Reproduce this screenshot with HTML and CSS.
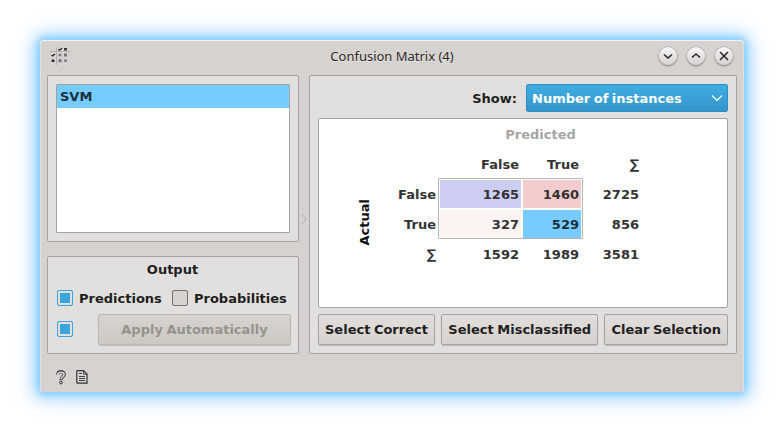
FILE: index.html
```html
<!DOCTYPE html>
<html lang="en">
<head>
<meta charset="utf-8">
<title>Confusion Matrix (4)</title>
<link rel="stylesheet" href="styles.css">
</head>
<body>
<main class="window">
  <header class="titlebar">
    <svg class="app-icon" width="20" height="18" viewBox="0 0 20 18">
      <path d="M0 4.500H20M6.500 0V18" stroke="#b3b0ae" fill="none"/>
      <path d="M8.500 2.200l1 1L12 1.200M1.500 7.900l1 1L5 6.900" stroke="#222" stroke-width="1.300" fill="none"/>
      <path d="M14.200 1h2.600v2.600h-2.600zM1.700 12.400h2.600v2.600H1.700z" fill="#222"/>
      <path d="M8.700 6.700h2.600v2.600H8.700zM14 6.500h3v3h-3zM8.500 12.200h3v3h-3zM14.200 12.400h2.600v2.600h-2.600z" fill="#777"/>
    </svg>
    <h1 class="title">Confusion Matrix (4)</h1>
    <div class="controls">
      <span class="control"><svg width="18" height="18" viewBox="0 0 18 18"><path d="M5 7.500l4 3.500 4-3.500"/></svg></span>
      <span class="control"><svg width="18" height="18" viewBox="0 0 18 18"><path d="M5 10.500l4-3.500 4 3.500"/></svg></span>
      <span class="control"><svg width="18" height="18" viewBox="0 0 18 18"><path d="M5 5l8 8M13 5l-8 8"/></svg></span>
    </div>
  </header>
  <div class="content">
    <aside class="sidebar">
      <section class="panel learners">
        <div class="list"><div class="list-item">SVM</div></div>
      </section>
      <section class="panel output">
        <h2 class="panel-title">Output</h2>
        <div class="checks">
          <span class="checkbox checked"></span><span class="check-label first">Predictions</span>
          <span class="checkbox"></span><span class="check-label">Probabilities</span>
        </div>
        <div class="apply">
          <span class="checkbox checked"></span>
          <button class="button disabled">Apply Automatically</button>
        </div>
      </section>
    </aside>
    <div class="splitter"><svg width="6" height="12" viewBox="0 0 6 12"><path d="M.5 1l5 5-5 5" fill="none" stroke="#aaa8a6"/></svg></div>
    <section class="panel results">
      <div class="show">
        <span class="show-label">Show:</span>
        <div class="combo"><span>Number of instances</span><svg width="12" height="8" viewBox="0 0 12 8"><path d="M1 1.500l5 5 5-5" fill="none" stroke="#fff" stroke-width="1.100"/></svg></div>
      </div>
      <div class="view">
        <div class="matrix">
          <div class="predicted">Predicted</div>
          <div class="actual"><span>Actual</span></div>
          <div class="cell head c1">False</div><div class="cell head">True</div><div class="cell head">∑</div>
          <div class="cell rowhead">False</div>
          <div class="frame">
            <div class="value correct">1265</div><div class="value wrong">1460</div>
            <div class="value faint">327</div><div class="value selected">529</div>
          </div>
          <div class="cell">2725</div>
          <div class="cell rowhead">True</div><div class="cell">856</div>
          <div class="cell rowhead">∑</div><div class="cell">1592</div><div class="cell">1989</div><div class="cell">3581</div>
        </div>
      </div>
      <div class="actions">
        <button class="button">Select Correct</button>
        <button class="button">Select Misclassified</button>
        <button class="button">Clear Selection</button>
      </div>
    </section>
  </div>
  <footer class="status">
    <svg width="10" height="15" viewBox="0 0 10 15"><path d="M1.800 4.500C1.800 .8 8.200 .8 8.200 4.300 8.200 6.600 5 6.700 5 10" fill="none" stroke="#444" stroke-width="3.400"/><path d="M1 4.500H1.900C2 1.500 8.100 1.500 8.100 4.300 8.100 6.600 5 6.700 5 9.200" fill="none" stroke="#d6d2cf" stroke-width="1.600"/><circle cx="5" cy="12.500" r="1.400" fill="#d6d2cf" stroke="#333"/></svg>
    <svg width="12" height="14" viewBox="0 0 12 14"><path d="M1.500.6h6l3.500 3.500v9H1.500q-.7 0-.7-.7V1.300q0-.7.700-.7z" fill="none" stroke="#333" stroke-width="1.200"/><path d="M7.500.8v3.400H11M3 3.500h3M3 6.500h6M3 8.500h6M3 10.500h6" fill="none" stroke="#444"/></svg>
  </footer>
</main>
</body>
</html>
```
FILE: styles.css
```css
* { box-sizing: border-box; }
body {
  margin: 0;
  padding: 40px;
  height: 432px;
  background: #fff;
  color: #221f1e;
  font: bold 13px/16px "DejaVu Sans", sans-serif;
  word-spacing: -1px;
  overflow: hidden;
}
.window {
  width: 704px;
  height: 352px;
  padding: 0 6px 0 7px;
  background: #d6d2cf;
  border-radius: 4px 4px 2px 2px;
  box-shadow: inset 0 1px #f3f2f1, inset 1px 0 #e2dfdd, inset -1px 0 #e2dfdd, 0 0 6px 1px #7dd2fb, 0 0 14px 4px #96d0fd, 0 1px 26px 7px #d5e8ff;
}
.titlebar {
  display: flex;
  height: 35px;
  justify-content: space-between;
  padding: 7px 5px 0 3px;
}
.app-icon { display: block; }
.title {
  margin: 0 0 0 55px;
  font: 13px/18px "Noto Sans", sans-serif;
  letter-spacing: -.01px;
  word-spacing: 0;
  color: #2b2827;
  text-shadow: 0 1px #eceae8;
}
.controls { display: flex; gap: 10px; }
.control {
  width: 18px;
  height: 18px;
  border-radius: 50%;
  background: linear-gradient(#f7f6f5, #d5d2cf);
  box-shadow: 0 0 0 .5px #aaa6a3, 0 1px 2px #6d6966;
}
.control svg { display: block; fill: none; stroke: #292625; stroke-width: 1.6; }
.content { display: flex; height: 279px; }
.sidebar { width: 252px; display: flex; flex-direction: column; gap: 14px; }
.panel {
  background: #e1e0de;
  border: 1px solid #a5a2a0;
  border-radius: 2px;
  padding: 8px;
}
.learners { height: 167px; }
.list { height: 149px; border: 1px solid #a5a2a0; border-radius: 1px; background: #fff; }
.list-item { height: 23px; padding-left: 3px; line-height: 23px; background: #78cbff; color: #18313f; }
.output { height: 98px; padding: 5px 7px 7px 9px; }
.panel-title { margin: 0; padding-right: 3px; font-size: 13px; line-height: 16px; text-align: center; }
.checks { display: flex; align-items: center; height: 16px; margin-top: 12px; }
.checkbox { width: 16px; height: 16px; flex: none; border: 1px solid #77716e; border-radius: 2px; background: #d6d2cf; }
.checked { border-color: #3aa5dc; background: #3aa5dc; box-shadow: inset 0 0 0 2px #e1e0de; }
.check-label { margin-left: 6px; padding-top: 2px; }
.check-label.first { width: 93px; flex: none; }
.apply { display: flex; justify-content: space-between; align-items: flex-start; height: 31px; margin-top: 8px; }
.apply .checkbox { margin-top: 7px; }
.button {
  height: 31px;
  padding: 0 6px;
  border: 1px solid #a5a2a0;
  border-radius: 2px;
  background: linear-gradient(#e2dedc, #d7d2cf);
  box-shadow: 0 1px 1px #bdbab8;
  color: #221f1e;
  font: inherit;
  word-spacing: inherit;
  white-space: nowrap;
}
.disabled { width: 193px; color: #96938f; border-color: #bbb9b4; background: linear-gradient(#d7d4d0, #ccc9c3); }
.splitter { width: 10px; padding: 138px 0 0 2px; }
.splitter svg { display: block; }
.results { width: 428px; }
.show { display: flex; justify-content: flex-end; align-items: center; gap: 9px; height: 28px; }
.show-label, .combo span { padding-top: 2px; }
.combo {
  width: 202px;
  height: 28px;
  padding: 0 4px 0 5px;
  display: flex;
  align-items: center;
  justify-content: space-between;
  border: 1px solid #2e8fc3;
  border-radius: 2px;
  background: linear-gradient(#3eade4, #3495c9);
  color: #fff;
}
.view { height: 190px; margin-top: 6px; border: 1px solid #a5a2a0; border-radius: 2px; background: #fff; }
.matrix {
  display: grid;
  grid-template-columns: 59px 60px 84px 60px 60px;
  grid-template-rows: repeat(5, 30px);
  color: #333;
}
.predicted { grid-column: 3 / 6; padding-left: 1px; text-align: center; line-height: 31px; color: #a6a6a6; }
.actual { grid-column: 1; grid-row: 3 / 6; display: flex; align-items: center; justify-content: center; padding: 0 0 3px 33px; color: #111; }
.actual span { writing-mode: vertical-rl; transform: rotate(180deg); }
.cell { text-align: right; padding-right: 3px; line-height: 31px; }
.c1 { grid-column: 3; }
.rowhead { grid-column: 2; padding-right: 2px; }
.frame {
  grid-column: 3 / 5;
  grid-row: 3 / 5;
  display: grid;
  grid-template-columns: 81px 58px;
  grid-template-rows: 28px 28px;
  gap: 2px;
  padding: 1px;
  margin: -1px -1px 0 0;
  border: 1px solid #b5b5b5;
  border-radius: 1px;
}
.value { text-align: right; padding-right: 2px; line-height: 29px; }
.correct { background: #cdcdf3; }
.wrong { background: #f3cdcd; }
.faint { background: #fcf3f3; }
.selected { background: #78cbff; color: #18313f; }
.actions { display: flex; justify-content: space-between; margin-top: 6px; }
.status { display: flex; align-items: center; gap: 10px; height: 38px; padding: 8px 0 0 9px; }
```
